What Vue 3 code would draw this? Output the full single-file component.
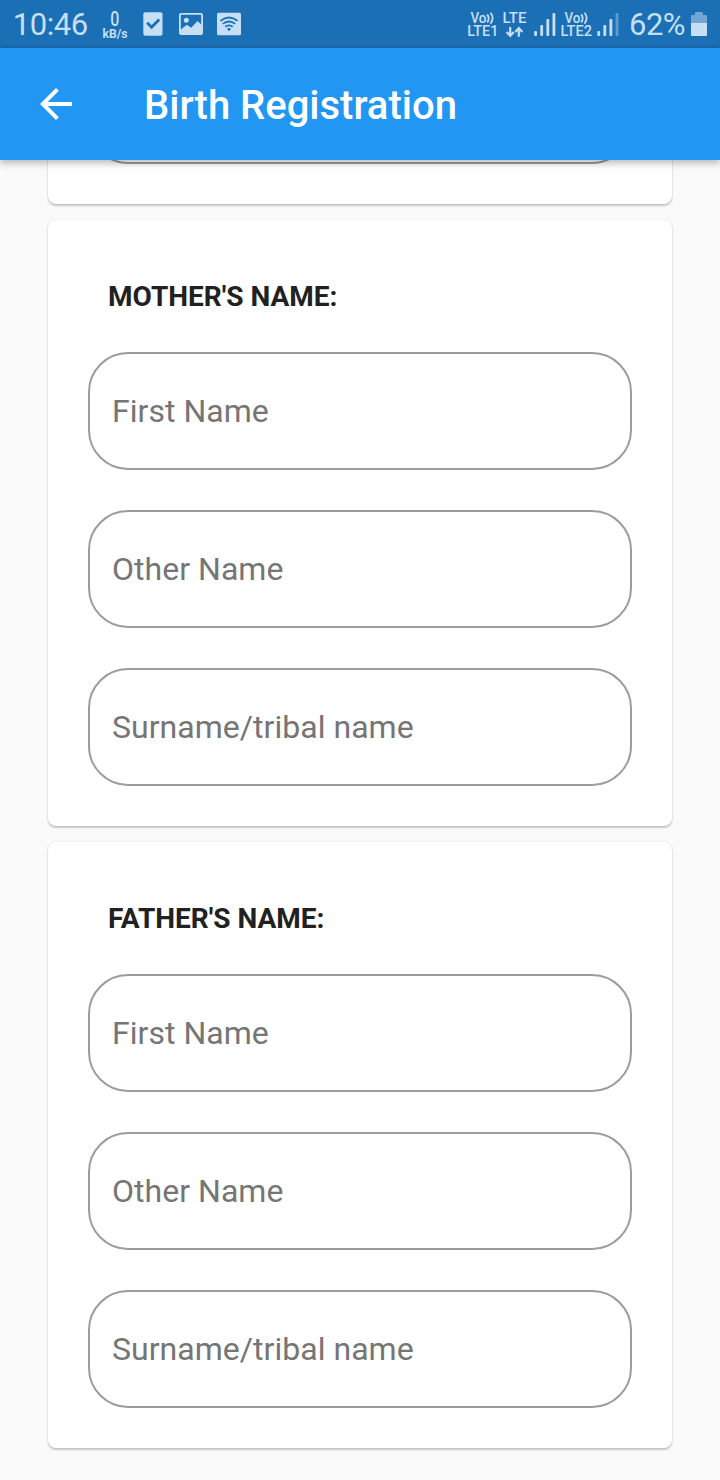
<script setup>
const sections = [
  { title: "MOTHER'S NAME:", fields: ['First Name', 'Other Name', 'Surname/tribal name'] },
  { title: "FATHER'S NAME:", fields: ['First Name', 'Other Name', 'Surname/tribal name'] },
]
</script>

<template>
  <div class="screen">
    <div class="status">
      <svg class="piece" width="100" height="48" viewBox="0 0 100 48">
        <text x="12.8" y="35" font-size="31" textLength="75.5">10:46</text>
      </svg>
      <svg class="piece" width="32" height="48" viewBox="100 0 32 48">
        <text transform="translate(110.2 26.4) scale(.82 1)" font-size="19.5" font-weight="500">0</text>
        <text x="102.5" y="37.8" font-size="12.3" font-weight="700" textLength="25" lengthAdjust="spacingAndGlyphs">kB/s</text>
      </svg>
      <svg class="piece" width="40" height="48" viewBox="132 0 40 48">
        <rect x="143.3" y="12.2" width="19.2" height="23.6" rx="2" />
        <path d="M147.2 22.8l4.4 4.4 7.6-7.6" fill="none" stroke="#1b6fb5" stroke-width="2.8" />
      </svg>
      <svg class="piece" width="38" height="48" viewBox="172 0 38 48">
        <path fill-rule="evenodd" d="M181 13h20q2 0 2 2v18q0 2-2 2h-20q-2 0-2-2v-18q0-2 2-2zM180.8 14.8v14.8l6-4.9 4.3 3.1 6.5-6.8 3.6 3.6v-9.8z" />
        <circle cx="186.3" cy="20.2" r="2.5" />
      </svg>
      <svg class="piece" width="40" height="48" viewBox="210 0 40 48">
        <rect x="217" y="12.7" width="24" height="22.5" rx="1.5" />
        <g fill="none" stroke="#1b6fb5" stroke-width="1.8">
          <path d="M220.4 20.9q8.6-6.9 17.2 0" />
          <path d="M222.8 23.9q6.2-4.9 12.4 0" />
          <path d="M225.3 26.7q3.7-2.8 7.4 0" />
        </g>
        <circle cx="229" cy="29.2" r="1.5" fill="#1b6fb5" />
      </svg>

      <svg class="piece right" width="37" height="48" viewBox="463 0 37 48">
        <text x="470.5" y="22.8" font-size="14" font-weight="500" textLength="16" lengthAdjust="spacingAndGlyphs">Vo</text>
        <path class="line" d="M487.2 14.4q3 4 0 8M490.5 12.8q4.4 5.4 0 10.8" />
        <text x="467.3" y="35.9" font-size="14.3" font-weight="500" textLength="31" lengthAdjust="spacingAndGlyphs">LTE1</text>
      </svg>
      <svg class="piece" width="30" height="48" viewBox="500 0 30 48">
        <text x="502.5" y="23" font-size="14.3" font-weight="500" textLength="24" lengthAdjust="spacingAndGlyphs">LTE</text>
        <path class="arrow" d="M510.2 27v8.8m-3.6-3.8l3.6 3.8 3.6-3.8M518.8 36.8v-8.6m-3.6 3.8l3.6-3.8 3.6 3.8" />
      </svg>
      <svg class="piece" width="28" height="48" viewBox="530 0 28 48">
        <rect x="534.2" y="31" width="2.8" height="5" rx="1" />
        <rect x="540.3" y="25" width="2.8" height="11" rx="1" />
        <rect x="546.4" y="19" width="2.8" height="17" rx="1" />
        <rect x="552.5" y="13" width="2.8" height="23" rx="1" />
      </svg>
      <svg class="piece" width="36" height="48" viewBox="558 0 36 48">
        <text x="564.5" y="22.8" font-size="14" font-weight="500" textLength="16" lengthAdjust="spacingAndGlyphs">Vo</text>
        <path class="line" d="M581.2 14.4q3 4 0 8M584.5 12.8q4.4 5.4 0 10.8" />
        <text x="560.5" y="35.9" font-size="14.3" font-weight="500" textLength="31.5" lengthAdjust="spacingAndGlyphs">LTE2</text>
      </svg>
      <svg class="piece" width="30" height="48" viewBox="594 0 30 48">
        <rect x="597.3" y="31" width="2.8" height="5" rx="1" />
        <rect x="603.4" y="25" width="2.8" height="11" rx="1" />
        <rect x="609.5" y="19" width="2.8" height="17" rx="1" />
        <rect x="615.6" y="13" width="2.8" height="23" rx="1" opacity=".4" />
      </svg>
      <svg class="piece" width="64" height="48" viewBox="624 0 64 48">
        <text x="629" y="35" font-size="31" textLength="56.5">62%</text>
      </svg>
      <svg class="piece" width="32" height="48" viewBox="688 0 32 48">
        <path opacity=".5" d="M691 23v-7q0-1 1-1h3v-2q0-1 1-1h6q1 0 1 1v2h3q1 0 1 1v7z" />
        <path d="M691 23h16v12q0 1-1 1h-14q-1 0-1-1z" />
      </svg>
    </div>

    <header class="bar">
      <svg class="back" width="32" height="32" viewBox="4 4 16 16">
        <path fill="#fff" d="M20 11H7.83l5.59-5.59L12 4l-8 8 8 8 1.41-1.41L7.83 13H20v-2z" />
      </svg>
      <h1>Birth Registration</h1>
    </header>

    <main class="list">
      <section class="card previous">
        <div class="field"></div>
      </section>
      <section v-for="s in sections" :key="s.title" class="card">
        <h2>{{ s.title }}</h2>
        <div v-for="f in s.fields" :key="f" class="field"><span>{{ f }}</span></div>
      </section>
    </main>
  </div>
</template>

<style>
body {
  margin: 0;
  background: #fafafa;
}
</style>

<style scoped>
.screen {
  width: 720px;
  height: 1480px;
  display: flex;
  flex-direction: column;
  overflow: hidden;
  background: #fafafa;
  font-family: Roboto, sans-serif;
}
.status {
  display: flex;
  flex: none;
  height: 48px;
  background: #1b6fb5;
}
.piece {
  flex: none;
  display: block;
  fill: #c6dff5;
}
.right {
  margin-left: auto;
}
.line,
.arrow {
  fill: none;
  stroke: #c6dff5;
  stroke-width: 1.8;
}
.arrow {
  stroke-width: 2.2;
}
.bar {
  position: relative;
  z-index: 1;
  flex: none;
  display: flex;
  align-items: center;
  box-sizing: border-box;
  height: 112px;
  padding-left: 40px;
  background: #2196f3;
  box-shadow: 0 4px 8px rgba(0, 0, 0, 0.16), 0 1px 7px rgba(0, 0, 0, 0.16);
}
h1 {
  margin: 0 0 0 72px;
  padding-top: 4px;
  color: #fff;
  font-size: 40px;
  font-weight: 500;
  line-height: 48px;
}
.list {
  flex: 1;
  min-height: 0;
  display: flex;
  flex-direction: column;
  gap: 16px;
  padding: 0 48px;
  overflow: hidden;
}
.card {
  flex: none;
  box-sizing: border-box;
  height: 606px;
  padding: 61px 40px 40px;
  border-radius: 8px;
  background: #fff;
  box-shadow: 0 2px 2px rgba(0, 0, 0, 0.2), 0 0 2px rgba(0, 0, 0, 0.13);
}
.previous {
  height: 154px;
  margin-top: -110px;
  padding: 0 40px;
}
.previous .field {
  margin-top: -4px;
}
h2 {
  margin: 0 20px 39px;
  color: #212121;
  font-size: 28px;
  font-weight: 700;
  line-height: 32px;
  white-space: nowrap;
}
.field {
  box-sizing: border-box;
  height: 118px;
  display: flex;
  align-items: center;
  padding-left: 22px;
  border: 2px solid #9c9c9c;
  border-radius: 40px;
  color: #757575;
  font-size: 32px;
  line-height: 38px;
  letter-spacing: 0.03px;
}
.field + .field {
  margin-top: 40px;
}
</style>
